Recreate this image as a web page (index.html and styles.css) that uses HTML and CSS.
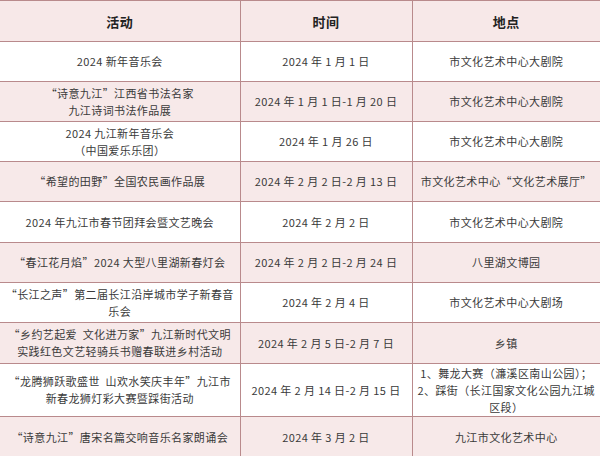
FILE: index.html
```html
<!DOCTYPE html>
<html lang="zh-CN">
<head>
<meta charset="utf-8">
<title>活动安排</title>
<link rel="stylesheet" href="styles.css">
</head>
<body>
<table class="events">
  <colgroup>
    <col class="c1"><col class="c2"><col class="c3">
  </colgroup>
  <thead>
    <tr class="head"><th>活动</th><th>时间</th><th>地点</th></tr>
  </thead>
  <tbody>
    <tr class="r40"><td>2024 新年音乐会</td><td>2024 年 1 月 1 日</td><td>市文化艺术中心大剧院</td></tr>
    <tr class="r40 alt"><td>“诗意九江”江西省书法名家<br>九江诗词书法作品展</td><td>2024 年 1 月 1 日-1 月 20 日</td><td>市文化艺术中心大剧院</td></tr>
    <tr class="r40"><td>2024 九江新年音乐会<br>（中国爱乐乐团）</td><td>2024 年 1 月 26 日</td><td>市文化艺术中心大剧院</td></tr>
    <tr class="r40 alt"><td>“希望的田野”全国农民画作品展</td><td>2024 年 2 月 2 日-2 月 13 日</td><td>市文化艺术中心“文化艺术展厅”</td></tr>
    <tr class="r41"><td>2024 年九江市春节团拜会暨文艺晚会</td><td>2024 年 2 月 2 日</td><td>市文化艺术中心大剧院</td></tr>
    <tr class="r40 alt"><td>“春江花月焰”2024 大型八里湖新春灯会</td><td>2024 年 2 月 2 日-2 月 24 日</td><td>八里湖文博园</td></tr>
    <tr class="r40"><td>“长江之声”第二届长江沿岸城市学子新春音<br>乐会</td><td>2024 年 2 月 4 日</td><td>市文化艺术中心大剧场</td></tr>
    <tr class="r41 alt"><td>“乡约艺起爱&nbsp;&nbsp;文化进万家”九江新时代文明<br>实践红色文艺轻骑兵书赠春联进乡村活动</td><td>2024 年 2 月 5 日-2 月 7 日</td><td>乡镇</td></tr>
    <tr class="r53"><td>“龙腾狮跃歌盛世&nbsp;&nbsp;山欢水笑庆丰年”九江市<br>新春龙狮灯彩大赛暨踩街活动</td><td>2024 年 2 月 14 日-2 月 15 日</td><td>1、舞龙大赛（濂溪区南山公园）；<br>2、踩街（长江国家文化公园九江城<br>区段）</td></tr>
    <tr class="r41 alt"><td>“诗意九江”唐宋名篇交响音乐名家朗诵会</td><td>2024 年 3 月 2 日</td><td>九江市文化艺术中心</td></tr>
  </tbody>
</table>
</body>
</html>
```

FILE: styles.css
```css
html, body {
  margin: 0;
  padding: 0;
  background: #ffffff;
  overflow: hidden;
}

.events {
  width: 600px;
  border-collapse: collapse;
  table-layout: fixed;
  font-family: "Noto Sans CJK SC", "Noto Sans", sans-serif;
  font-size: 11px;
  letter-spacing: 0.4px;
  color: #3a3a3a;
}

.c1 { width: 240px; }
.c2 { width: 172px; }
.c3 { width: 188px; }

.events th,
.events td {
  border: 1px solid #b98a8c;
  text-align: center;
  vertical-align: middle;
  padding: 0 4px;
  line-height: 17px;
}

.events th:first-child,
.events td:first-child {
  border-left: none;
}

.events th:last-child,
.events td:last-child {
  border-right: none;
}

.head {
  height: 41px;
  background: #f7e8e8;
}

.head th {
  font-size: 13px;
  font-weight: 700;
  color: #222222;
  letter-spacing: 0.5px;
}

.r40 { height: 40px; }
.r41 { height: 41px; }
.r53 { height: 53px; }

.alt { background: #f7e9e9; }
```
